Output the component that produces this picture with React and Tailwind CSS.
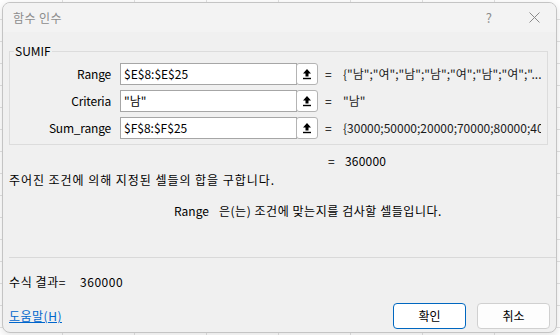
import React from 'react'

const font = "font-['Noto_Sans_CJK_KR','Noto_Sans',sans-serif]"

function RefIcon() {
    return (
        <svg width="10" height="12" viewBox="0 0 10 12">
            <path d="M5 1 L9 5.5 H6.5 V8.5 H3.5 V5.5 H1 Z" fill="#000" />
            <rect x="1" y="9.8" width="8" height="1.4" fill="#000" />
        </svg>
    )
}

function ArgRow({ label, value, result }) {
    return (
        <div className="flex items-center h-[22px]">
            <div className="w-[101px] text-right text-[12px] leading-[16px] text-black tracking-[-0.2px]">{label}</div>
            <div className="ml-[9px] flex h-[22px]">
                <div className="w-[177px] h-[22px] border border-[#a6a6a6] bg-white pl-[3px] text-[12px] leading-[20px] text-black">{value}</div>
                <button className="-ml-px w-[22px] h-[22px] flex items-center justify-center rounded-[3px] border border-[#b4b4b4] bg-white">
                    <RefIcon />
                </button>
            </div>
            <div className="ml-[7px] w-[11px] text-[12px] leading-[16px] text-black">=</div>
            <div className="ml-[7px] w-[198px] overflow-hidden whitespace-nowrap text-[12px] leading-[16px] text-[#1a1a1a]">{result}</div>
        </div>
    )
}

export default function App() {
    return (
        <div className={`${font} w-[560px] h-[335px] overflow-hidden bg-white bg-[linear-gradient(to_right,#e2e2e2_1px,transparent_1px),linear-gradient(to_bottom,#e2e2e2_1px,transparent_1px)] bg-[size:72px_22px] bg-[position:62px_19px] pl-[2px] pt-[2px]`}>
            <div className="w-[555px] h-[331px] rounded-[8px] border border-[#c4c4c4] bg-[#f0f0f0] flex flex-col overflow-hidden shadow-[0_2px_8px_rgba(0,0,0,0.12)]">
                {/* title bar */}
                <div className="h-[29px] shrink-0 bg-[#f3f3f3] flex items-center pl-[10px] pr-[16px]">
                    <span className="text-[12px] leading-[16px] text-[#8c8c8c] tracking-[0.4px]">함수 인수</span>
                    <span className="ml-auto text-[13px] leading-[16px] text-[#8c8c8c]">?</span>
                    <svg className="ml-[37px]" width="11" height="11" viewBox="0 0 11 11">
                        <path d="M0.5 0.5 L10.5 10.5 M10.5 0.5 L0.5 10.5" stroke="#8a8a8a" strokeWidth="1" />
                    </svg>
                </div>

                <div className="px-[6px]">
                    {/* group box */}
                    <div className="relative mt-[19px] w-[539px] h-[94px] border border-[#dcdcdc] pt-[11px]">
                        <span className="absolute -top-[9px] left-[4px] bg-[#f0f0f0] px-[1px] text-[12px] leading-[16px] text-black">SUMIF</span>
                        <div className="flex flex-col gap-[5px]">
                            <ArgRow label="Range" value="$E$8:$E$25" result={'{"남";"여";"남";"남";"여";"남";"여";"...'} />
                            <ArgRow label="Criteria" value={'"남"'} result={'"남"'} />
                            <ArgRow label="Sum_range" value="$F$8:$F$25" result="{30000;50000;20000;70000;80000;40000;" />
                        </div>
                    </div>

                    <div className="mt-[8px] flex text-[12px] leading-[16px] text-black">
                        <span className="ml-[319px] w-[11px]">=</span>
                        <span className="ml-[6px] tracking-[0.2px]">360000</span>
                    </div>
                    <div className="mt-[3px] text-[12px] leading-[16px] text-black tracking-[0.95px]">주어진 조건에 의해 지정된 셀들의 합을 구합니다.</div>
                    <div className="mt-[15px] pl-[165px] flex text-[12px] leading-[16px] text-black">
                        <span>Range</span>
                        <span className="ml-[10px] tracking-[0.55px]">은(는) 조건에 맞는지를 검사할 셀들입니다.</span>
                    </div>
                </div>

                <div className="mt-[38px] ml-[6px] h-px bg-[#d9d9d9]"></div>

                <div className="px-[6px]">
                    <div className="mt-[16px] flex text-[12px] leading-[16px] text-black">
                        <span className="tracking-[0.6px]">수식 결과=</span>
                        <span className="ml-[14px] tracking-[0.5px]">360000</span>
                    </div>
                    <div className="mt-[13px] flex items-center">
                        <a href="#" className="text-[12px] leading-[16px] text-[#0066cc] underline tracking-[0.5px]">도움말(H)</a>
                        <button className="ml-auto w-[73px] h-[26px] rounded-[4px] border border-[#0067c0] bg-white text-[12px] text-black">확인</button>
                        <button className="ml-[11px] w-[73px] h-[26px] rounded-[4px] border border-[#d0d0d0] bg-[#fdfdfd] text-[12px] text-black">취소</button>
                    </div>
                </div>
            </div>
        </div>
    )
}
